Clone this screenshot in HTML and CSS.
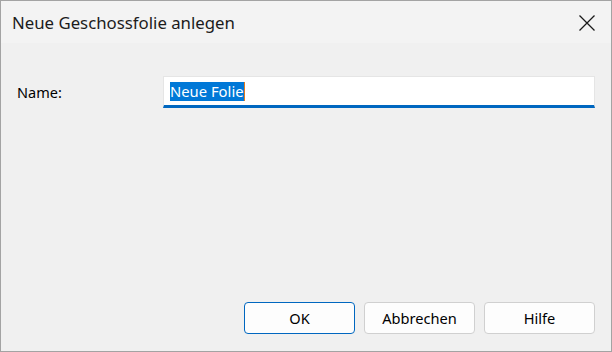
FILE: index.html
```html
<!DOCTYPE html>
<html lang="de">
<head>
<meta charset="utf-8">
<title>Neue Geschossfolie anlegen</title>
<link rel="stylesheet" href="styles.css">
</head>
<body>
<div class="window">
  <div class="titlebar">
    <span class="title">Neue Geschossfolie anlegen</span>
    <svg class="close" width="16" height="16" viewBox="0 0 16 16"><path d="M0.5 0.5 L15.5 15.5 M15.5 0.5 L0.5 15.5" stroke="#1a1a1a" stroke-width="1.3" fill="none"/></svg>
  </div>
  <div class="content">
    <div class="row">
      <label class="label">Name:</label>
      <div class="input"><span class="sel">Neue Folie</span><span class="caret"></span></div>
    </div>
    <div class="footer">
      <button class="btn btn-default">OK</button>
      <button class="btn">Abbrechen</button>
      <button class="btn">Hilfe</button>
    </div>
  </div>
</div>
</body>
</html>
```
FILE: styles.css
```css
html, body { margin: 0; padding: 0; }
body { font-family: "Noto Sans", "Open Sans", sans-serif; color: #000; }
.window {
  width: 612px; height: 352px; box-sizing: border-box;
  border: 1px solid #a3a3a3;
  display: flex; flex-direction: column;
  background: #f0f0f0;
}
.titlebar {
  height: 42px; background: #f3f3f3;
  display: flex; align-items: center; justify-content: space-between;
  padding: 0 16px 0 11px;
}
.title { font-size: 16.8px; color: #1b1b1b; margin-top: 1px; }
.close { margin-top: 1px; }
.content { flex: 1; display: flex; flex-direction: column; padding: 33px 16px 17px 16px; }
.row { display: flex; align-items: center; }
.label { width: 146px; font-size: 14.5px; }
.input {
  flex: 1; height: 32px; box-sizing: border-box; background: #fff;
  border: 1px solid #e5e5e5; border-bottom: 3px solid #0067c0;
  display: flex; align-items: center; padding-left: 6px;
}
.sel { background: #0078d7; color: #fff; font-size: 14.8px; line-height: 19px; }
.caret { width: 1px; height: 19px; background: #e07a1f; }
.footer { margin-top: auto; display: flex; justify-content: flex-end; gap: 9px; }
.btn {
  width: 111px; height: 32px; box-sizing: border-box;
  background: #fdfdfd; border: 1px solid #d0d0d0; border-radius: 4px;
  font-family: inherit; font-size: 14.6px; color: #000; padding: 0;
}
.btn-default { border-color: #0067c0; }
```
